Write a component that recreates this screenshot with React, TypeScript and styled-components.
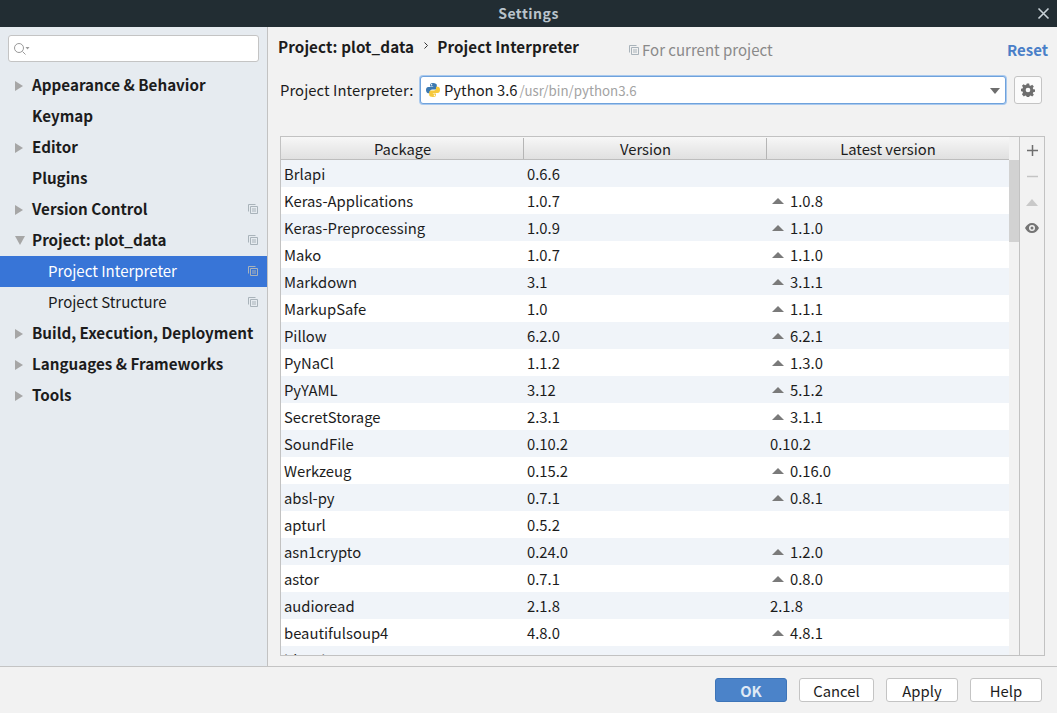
import React from "react";
import styled, { createGlobalStyle } from "styled-components";

const Global = createGlobalStyle`
  html, body { margin: 0; padding: 0; background: #f2f2f2; }
  body { font-family: "Noto Sans CJK SC", "Noto Sans", sans-serif; font-size: 14.8px; color: #1c1c1c; }
  * { box-sizing: border-box; }
`;

const Window = styled.div`
  width: 1057px; height: 713px; display: flex; flex-direction: column; overflow: hidden; background: #f2f2f2;
`;
const TitleBar = styled.div`
  height: 27px; flex: none; background: #222d33; color: #b9c4cc; display: flex; align-items: center; justify-content: center;
  position: relative; font-weight: 700; font-size: 14px; letter-spacing: 0.5px; padding-bottom: 1px;
`;
const CloseBox = styled.svg`
  position: absolute; right: 7px; top: 7px; width: 13px; height: 13px;
`;
const Main = styled.div`
  flex: 1; min-height: 0; display: flex;
`;
const Sidebar = styled.aside`
  width: 268px; flex: none; background: #e6ebf0; border-right: 1px solid #c2c2c2; display: flex; flex-direction: column; padding-top: 8px;
`;
const SearchBox = styled.div`
  height: 27px; margin: 0 8px; width: 251px; background: #fff; border: 1px solid #c4c4c4; border-radius: 3px; display: flex; align-items: center; padding-left: 4px;
`;
const Tree = styled.div`
  margin-top: 8px; display: flex; flex-direction: column;
`;
const TreeRow = styled.div<{ $selected?: boolean }>`
  height: 31px; display: flex; align-items: center; position: relative;
  background: ${p => (p.$selected ? "#3875d7" : "transparent")};
  color: ${p => (p.$selected ? "#fff" : "#1c1c1c")};
`;
const Arrow = styled.div`
  width: 32px; flex: none; display: flex; align-items: center; padding-left: 15px;
`;
const TreeLabel = styled.span<{ $bold?: boolean; $child?: boolean }>`
  font-weight: ${p => (p.$bold ? 700 : 400)};
  font-size: ${p => (p.$bold ? "15.2px" : "15px")};
  padding-left: ${p => (p.$child ? "16px" : "0")};
  flex: 1; line-height: 20px; position: relative; top: ${p => (p.$bold ? "-2px" : "-1px")}; white-space: nowrap;
`;
const CopyWrap = styled.span`
  position: absolute; right: 9px; top: 10px; display: flex;
`;
const Content = styled.main`
  flex: 1; min-width: 0; display: flex; flex-direction: column; padding: 0 13px 11px 12px;
`;
const Breadcrumb = styled.div`
  height: 48px; flex: none; display: flex; align-items: flex-start; padding-top: 8px; margin: 0 -4px 0 -2px;
`;
const Crumb = styled.span`
  font-weight: 700; font-size: 15.2px; letter-spacing: 0.1px; line-height: 22px; white-space: nowrap;
`;
const CrumbSep = styled.svg`
  width: 4px; height: 7px; margin: 7px 9px 0 10px; flex: none;
`;
const ScopeNote = styled.span`
  margin-left: 50px; display: flex; align-items: center; color: #8a8a8a; font-size: 15px; line-height: 22px; padding-top: 4px; gap: 3px; white-space: nowrap;
`;
const ResetLink = styled.span`
  margin-left: auto; margin-top: 4px; color: #4a7fc8; font-weight: 700; font-size: 15px; line-height: 22px;
`;
const InterpRow = styled.div`
  height: 30px; flex: none; display: flex; align-items: center;
`;
const InterpLabel = styled.span`
  line-height: 22px; width: 140px; flex: none; white-space: nowrap; letter-spacing: 0.08px;
`;
const Select = styled.div`
  width: 586px; height: 28px; background: #fff; border: 1px solid #6fa2dc; border-radius: 3px; box-shadow: 0 0 0 1px #a9c9ee;
  display: flex; align-items: center; padding-left: 4px; position: relative;
`;
const SelectName = styled.span`
  margin-left: 3px; line-height: 22px;
`;
const SelectPath = styled.span`
  margin-left: 2px; color: #a3a3a3; font-size: 13.300px; line-height: 22px; padding-top: 1px;
`;
const Caret = styled.svg`
  position: absolute; right: 5px; top: 11px; width: 10px; height: 6px;
`;
const GearButton = styled.div`
  width: 28px; height: 28px; margin-left: 8px; background: #fbfbfb; border: 1px solid #c4c4c4; border-radius: 3px; display: flex; align-items: center; justify-content: center;
`;
const TablePanel = styled.div`
  margin-top: 31px; height: 520px; flex: none; width: 765px; border: 1px solid #c2c2c2; display: flex;
`;
const TableCol = styled.div`
  width: 728px; flex: none; display: flex; flex-direction: column; min-height: 0;
`;
const HeaderRow = styled.div`
  height: 23px; flex: none; display: grid; grid-template-columns: 243px 243px 242px; background: linear-gradient(#f7f7f7, #e0e0e0); border-bottom: 1px solid #bdbdbd;
`;
const HeaderCell = styled.div`
  text-align: center; line-height: 24px; position: relative;
  & + &::before { content: ""; position: absolute; left: -1px; top: 1px; bottom: 2px; width: 1px; background: #b5b5b5; }
`;
const Rows = styled.div`
  flex: 1; min-height: 0; overflow: hidden;
`;
const Row = styled.div<{ $odd: boolean }>`
  height: 27px; flex: none; display: grid; grid-template-columns: 243px 243px 242px; background: ${p => (p.$odd ? "#f0f4f9" : "#fff")};
`;
const Cell = styled.div`
  display: flex; align-items: center; padding-left: 3px; line-height: 27px; white-space: nowrap;
`;
const LatestCell = styled(Cell)<{ $up: boolean }>`
  padding-left: ${p => (p.$up ? "5px" : "3px")};
`;
const UpMark = styled.svg`
  width: 12px; height: 6px; margin-right: 6px; flex: none;
`;
const ScrollTrack = styled.div`
  width: 10px; flex: none; background: #f2f2f2; padding-top: 23px;
`;
const ScrollThumb = styled.div`
  height: 82px; background: #d2d2d2;
`;
const SideTools = styled.div`
  flex: 1; border-left: 1px solid #c2c2c2; background: #f2f2f2; display: flex; flex-direction: column; align-items: center;
`;
const ToolSlot = styled.div`
  height: 26px; width: 100%; display: flex; align-items: center; justify-content: center;
`;
const Footer = styled.footer`
  height: 47px; flex: none; border-top: 1px solid #c4c4c4; background: #f2f2f2; display: flex; align-items: flex-start; justify-content: flex-end; padding: 11px 15px 0 0;
`;
const Button = styled.div<{ $w: number; $primary?: boolean }>`
  width: ${p => p.$w}px; height: 24px; margin-left: ${p => (p.$primary ? "0" : "12px")};
  border: 1px solid ${p => (p.$primary ? "#3d74b8" : "#c4c4c4")}; border-radius: 3px;
  background: ${p => (p.$primary ? "#4b83c9" : "#fff")};
  color: ${p => (p.$primary ? "#dfe9f5" : "#1c1c1c")};
  font-weight: ${p => (p.$primary ? 700 : 400)};
  display: flex; align-items: center; justify-content: center; line-height: 22px; padding-top: 1px;
`;

const copyIcon = (
  <svg width="10" height="10" viewBox="0 0 10 10" fill="none" stroke="#a9b3ba" strokeWidth="1">
    <path d="M.5 7.5v-7h7" />
    <path d="M2.5 2.5h7v7h-7z" />
    <path d="M4 5h4M4 7h4" />
  </svg>
);

const RightArrow = () => (
  <svg width="9" height="10" viewBox="0 0 9 10"><path d="M0 0l8 5-8 5z" fill="#a6a6a6" /></svg>
);
const DownArrow = () => (
  <svg width="10" height="9" viewBox="0 0 10 9"><path d="M0 0h10L5 9z" fill="#a6a6a6" /></svg>
);

type Node = { label: string; bold?: boolean; arrow?: "r" | "d"; copy?: boolean; child?: boolean; selected?: boolean };
const nodes: Node[] = [
  { label: "Appearance & Behavior", bold: true, arrow: "r" },
  { label: "Keymap", bold: true },
  { label: "Editor", bold: true, arrow: "r" },
  { label: "Plugins", bold: true },
  { label: "Version Control", bold: true, arrow: "r", copy: true },
  { label: "Project: plot_data", bold: true, arrow: "d", copy: true },
  { label: "Project Interpreter", child: true, copy: true, selected: true },
  { label: "Project Structure", child: true, copy: true },
  { label: "Build, Execution, Deployment", bold: true, arrow: "r" },
  { label: "Languages & Frameworks", bold: true, arrow: "r" },
  { label: "Tools", bold: true, arrow: "r" },
];

const packages: [string, string, string, boolean][] = [
  ["Brlapi", "0.6.6", "", false],
  ["Keras-Applications", "1.0.7", "1.0.8", true],
  ["Keras-Preprocessing", "1.0.9", "1.1.0", true],
  ["Mako", "1.0.7", "1.1.0", true],
  ["Markdown", "3.1", "3.1.1", true],
  ["MarkupSafe", "1.0", "1.1.1", true],
  ["Pillow", "6.2.0", "6.2.1", true],
  ["PyNaCl", "1.1.2", "1.3.0", true],
  ["PyYAML", "3.12", "5.1.2", true],
  ["SecretStorage", "2.3.1", "3.1.1", true],
  ["SoundFile", "0.10.2", "0.10.2", false],
  ["Werkzeug", "0.15.2", "0.16.0", true],
  ["absl-py", "0.7.1", "0.8.1", true],
  ["apturl", "0.5.2", "", false],
  ["asn1crypto", "0.24.0", "1.2.0", true],
  ["astor", "0.7.1", "0.8.0", true],
  ["audioread", "2.1.8", "2.1.8", false],
  ["beautifulsoup4", "4.8.0", "4.8.1", true],
  ["bleach", "", "", false],
];

export default function App() {
  return (
    <Window>
      <Global />
      <TitleBar>
        Settings
        <CloseBox viewBox="0 0 13 13"><path d="M1.5 1.5l10 10M11.5 1.5l-10 10" stroke="#c9d2d8" strokeWidth="1.6" /></CloseBox>
      </TitleBar>
      <Main>
        <Sidebar>
          <SearchBox>
            <svg width="17" height="14" viewBox="0 0 17 14" fill="none">
              <circle cx="6" cy="6" r="4.5" stroke="#9a9a9a" />
              <path d="M9.5 9.5l3 3" stroke="#9a9a9a" />
              <path d="M12.5 5h4l-2 2.5z" fill="#9a9a9a" />
            </svg>
          </SearchBox>
          <Tree>
            {nodes.map(n => (
              <TreeRow key={n.label} $selected={n.selected}>
                <Arrow>{n.arrow === "r" && <RightArrow />}{n.arrow === "d" && <DownArrow />}</Arrow>
                <TreeLabel $bold={n.bold} $child={n.child}>{n.label}</TreeLabel>
                {n.copy && <CopyWrap>{copyIcon}</CopyWrap>}
              </TreeRow>
            ))}
          </Tree>
        </Sidebar>
        <Content>
          <Breadcrumb>
            <Crumb>Project: plot_data</Crumb>
            <CrumbSep viewBox="0 0 4 7"><path d="M.5.5l3 3-3 3" fill="none" stroke="#333" /></CrumbSep>
            <Crumb>Project Interpreter</Crumb>
            <ScopeNote>{copyIcon}For current project</ScopeNote>
            <ResetLink>Reset</ResetLink>
          </Breadcrumb>
          <InterpRow>
            <InterpLabel>Project Interpreter:</InterpLabel>
            <Select>
              <svg width="16" height="16" viewBox="0 0 16 16">
                <path d="M8 1C5.500 1 5 2 5 3v1.500h3.200V5H3.200C2 5 1 6 1 8s1 3.200 2.200 3.200H5V9.500c0-1 1-2 2-2h3c1 0 1.800-.8 1.800-1.800V3c0-1-1.300-2-3.800-2z" fill="#3b78b0" />
                <path d="M8 15c2.500 0 3-1 3-2v-1.500H7.800V11H12.800C14 11 15 10 15 8s-1-3.200-2.200-3.200H11V6.500c0 1-1 2-2 2H6c-1 0-1.800.8-1.800 1.800V13c0 1 1.300 2 3.800 2z" fill="#f6c93c" />
                <circle cx="6.500" cy="2.800" r=".8" fill="#fff" />
                <circle cx="9.500" cy="13.200" r=".8" fill="#fff" />
              </svg>
              <SelectName>Python 3.6</SelectName>
              <SelectPath>/usr/bin/python3.6</SelectPath>
              <Caret viewBox="0 0 10 6"><path d="M0 0h10L5 6z" fill="#6e6e6e" /></Caret>
            </Select>
            <GearButton>
              <svg width="14" height="14" viewBox="0 0 24 24">
                <path fillRule="evenodd" fill="#6e6e6e" d="M10 1h4l.6 3.100 2 .8 2.600-1.800 2.800 2.800-1.800 2.600.8 2 3 .6v4l-3 .6-.8 2 1.800 2.600-2.800 2.800-2.600-1.800-2 .8-.6 3.100h-4l-.6-3.100-2-.8-2.600 1.800L1.600 19.200l1.800-2.600-.8-2-3-.6v-4l3-.6.8-2-1.800-2.600L4.400 2.100 7 3.900l2-.8zM12 8a4 4 0 1 0 0 8 4 4 0 0 0 0-8z" />
              </svg>
            </GearButton>
          </InterpRow>
          <TablePanel>
            <TableCol>
              <HeaderRow>
                <HeaderCell>Package</HeaderCell>
                <HeaderCell>Version</HeaderCell>
                <HeaderCell>Latest version</HeaderCell>
              </HeaderRow>
              <Rows>
                {packages.map(([name, ver, latest, up], i) => (
                  <Row key={name} $odd={i % 2 === 0}>
                    <Cell>{name}</Cell>
                    <Cell>{ver}</Cell>
                    <LatestCell $up={up}>
                      {up && <UpMark viewBox="0 0 12 6"><path d="M0 6L6 0l6 6z" fill="#7a7a7a" /></UpMark>}
                      {latest}
                    </LatestCell>
                  </Row>
                ))}
              </Rows>
            </TableCol>
            <ScrollTrack><ScrollThumb /></ScrollTrack>
            <SideTools>
              <ToolSlot><svg width="11" height="11" viewBox="0 0 11 11"><path d="M5.500 0v11M0 5.500h11" stroke="#6e6e6e" strokeWidth="1.500" /></svg></ToolSlot>
              <ToolSlot><svg width="11" height="11" viewBox="0 0 11 11"><path d="M0 5.500h11" stroke="#c4c4c4" strokeWidth="1.500" /></svg></ToolSlot>
              <ToolSlot><svg width="12" height="7" viewBox="0 0 12 7"><path d="M0 7l6-7 6 7z" fill="#c9c9c9" /></svg></ToolSlot>
              <ToolSlot>
                <svg width="14" height="10" viewBox="0 0 14 10">
                  <path fillRule="evenodd" fill="#757575" d="M7 0c3 0 5.500 2 7 5-1.500 3-4 5-7 5S1.500 8 0 5c1.500-3 4-5 7-5zm0 2a3 3 0 1 0 0 6 3 3 0 0 0 0-6z" />
                  <circle cx="7" cy="5" r="1.500" fill="#757575" />
                </svg>
              </ToolSlot>
            </SideTools>
          </TablePanel>
        </Content>
      </Main>
      <Footer>
        <Button $w={72} $primary>OK</Button>
        <Button $w={75}>Cancel</Button>
        <Button $w={72}>Apply</Button>
        <Button $w={72}>Help</Button>
      </Footer>
    </Window>
  );
}
